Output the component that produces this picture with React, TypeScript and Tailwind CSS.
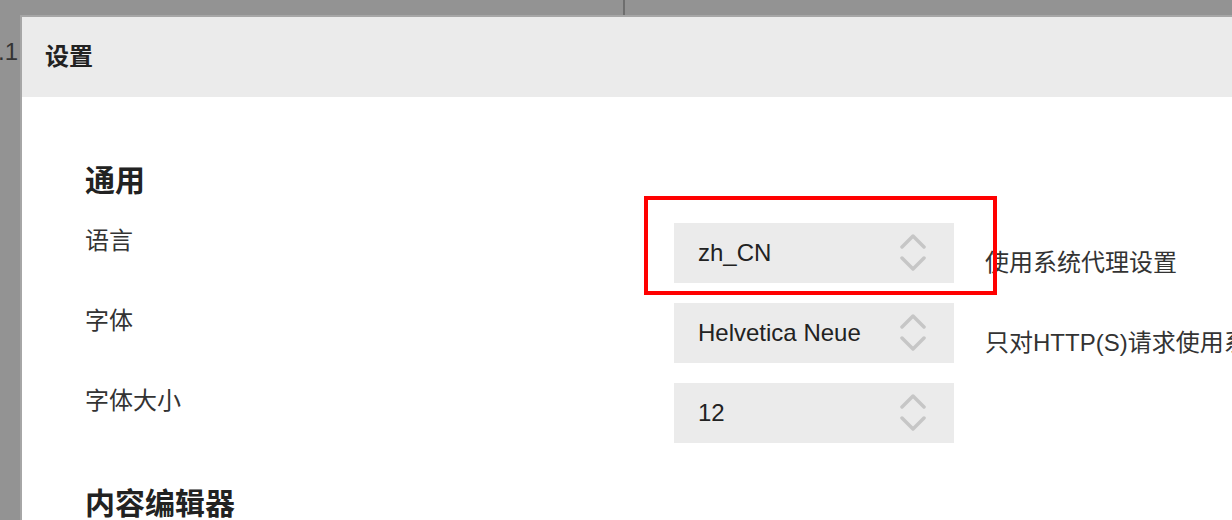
import React from 'react'

const cjk = { fontFamily: '"Liberation Sans", "Noto Sans CJK SC", sans-serif' }

function Chevrons() {
  return (
    <svg width="26" height="40" viewBox="0 0 26 40" fill="none" stroke="#c6c6c6" strokeWidth="3.5" strokeLinecap="round" strokeLinejoin="round">
      <polyline points="2,14 13,3 24,14" />
      <polyline points="2,25 13,36 24,25" />
    </svg>
  )
}

function Select({ value, highlight }: { value: string; highlight?: boolean }) {
  return (
    <div className="relative shrink-0">
      <div className="flex h-[60px] w-[280px] items-center justify-between bg-[#ebebeb] pl-[24px] pr-[28px] text-[24px] leading-[30px] text-[#222]">
        <span>{value}</span>
        <Chevrons />
      </div>
      {/* red annotation box */}
      {highlight && (
        <div className="pointer-events-none absolute left-[-30px] top-[-27px] h-[99px] w-[353px] border-[4px] border-[#ff0000]" />
      )}
    </div>
  )
}

const rows = [
  { label: '语言', value: 'zh_CN', note: '使用系统代理设置', highlight: true },
  { label: '字体', value: 'Helvetica Neue', note: '只对HTTP(S)请求使用系统代理设置' },
  { label: '字体大小', value: '12', note: '' },
]

export default function App() {
  return (
    <div className="h-[520px] w-[1232px] overflow-hidden bg-[#939393]" style={cjk}>
      {/* backdrop top bar */}
      <div className="flex h-[15px] pl-[623px]">
        <div className="h-full w-[2px] bg-[#6e6e6e]" />
      </div>

      <div className="flex">
        {/* backdrop left strip */}
        <div className="flex w-[20px] shrink-0 justify-end overflow-hidden pt-[22px]">
          <span className="whitespace-nowrap pr-[2px] text-[24px] leading-[30px] text-[#333]">3.1</span>
        </div>

        {/* dialog */}
        <div className="w-[1300px] shrink-0 border-l-2 border-t-2 border-[#a6a6a6] bg-white">
          <div className="flex h-[80px] items-center bg-[#ebebeb] pl-[23px]">
            <span className="text-[24px] font-bold leading-[30px] text-[#222]">设置</span>
          </div>

          <div className="pl-[63px] pt-[64px]">
            <h2 className="text-[30px] font-bold leading-[40px] text-[#222]">通用</h2>

            <div className="mt-[22px] flex flex-col gap-[20px]">
              {rows.map((r) => (
                <div key={r.label} className="flex items-start">
                  <div className="mt-[3px] w-[589px] shrink-0 text-[24px] leading-[30px] text-[#333]">{r.label}</div>
                  <Select value={r.value} highlight={r.highlight} />
                  <div className="ml-[31px] mt-[25px] shrink-0 whitespace-nowrap text-[24px] leading-[30px] text-[#333]">{r.note}</div>
                </div>
              ))}
            </div>

            <h2 className="mt-[41px] text-[30px] font-bold leading-[40px] text-[#222]">内容编辑器</h2>
          </div>
        </div>
      </div>
    </div>
  )
}
